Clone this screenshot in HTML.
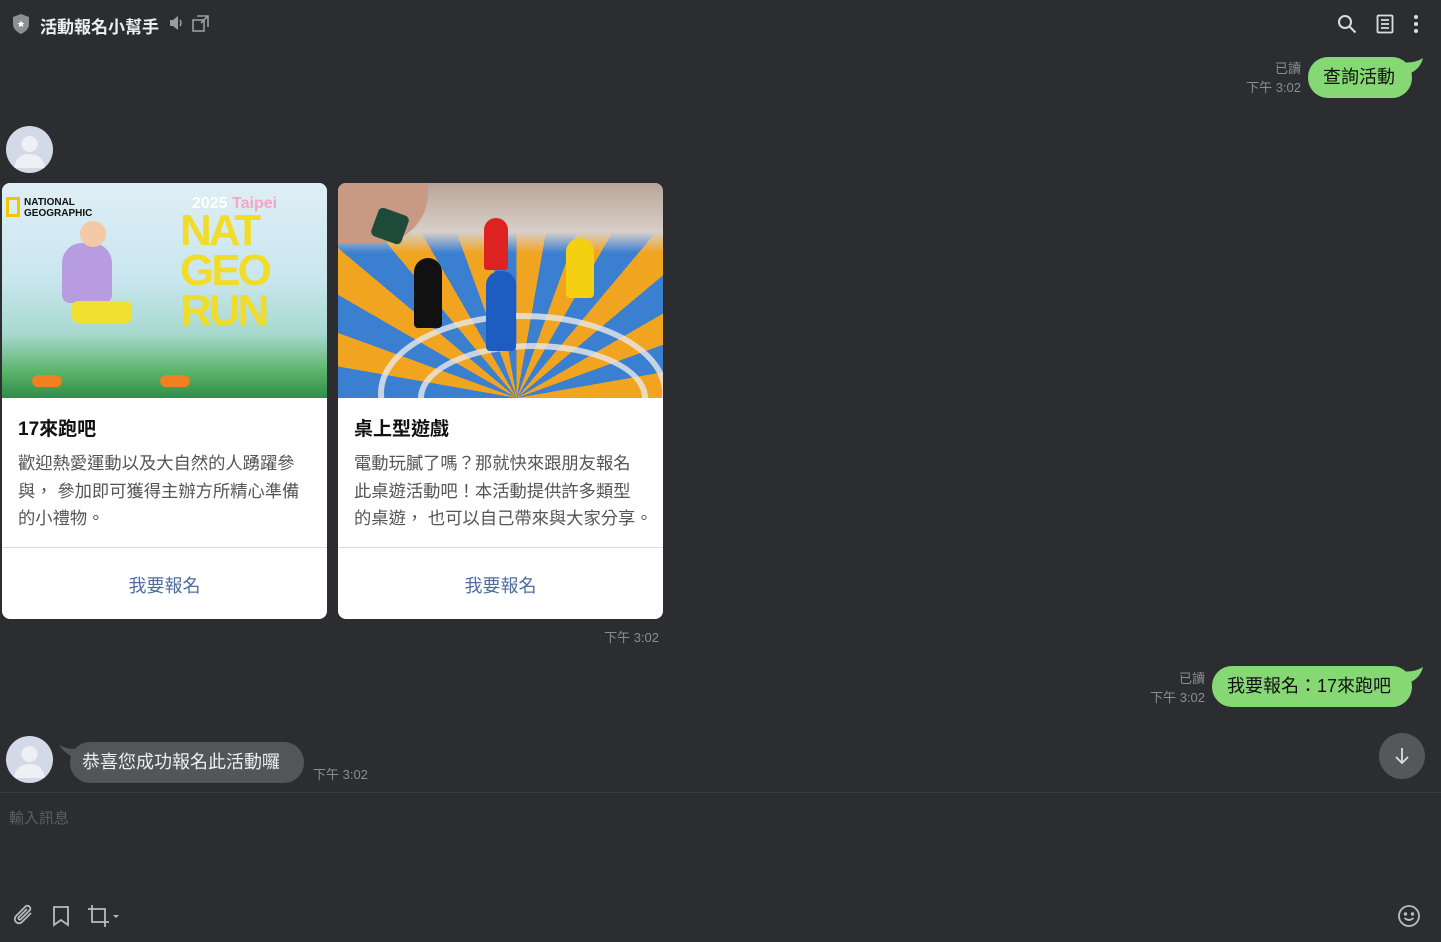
<!DOCTYPE html>
<html><head><meta charset="utf-8"><style>
*{margin:0;padding:0;box-sizing:border-box}
body{width:1441px;height:942px;background:#2c2d30;font-family:"Liberation Sans","Noto Sans CJK TC",sans-serif;position:relative;overflow:hidden;color:#fff}
.abs{position:absolute}
.meta{color:#8a8c90;font-size:13px;text-align:right;line-height:19px}
.bubg{background:#85d874;color:#111;font-size:18px;border-radius:20px;height:41px;line-height:41px;padding:0 15px;white-space:nowrap}
.card{position:absolute;top:183px;width:325px;height:436px;background:#fff;border-radius:8px;overflow:hidden}
.card .img{height:215px;overflow:hidden;position:relative}
.card h3{color:#111;font-size:19px;font-weight:bold;margin:20px 0 0 16px;line-height:24px}
.card p{color:#555;font-size:17.3px;line-height:27.5px;margin:8px 0 0 16px;height:96px;white-space:nowrap}
.card .hr{position:absolute;top:364px;left:0;right:0;border-top:1px solid #ddd}
.card .btn{position:absolute;top:389px;left:0;right:0;text-align:center;color:#4d6e9e;font-size:18px}
.av{width:47px;height:47px;border-radius:50%;background:#d3d9e6;overflow:hidden}
</style></head><body>
<svg class="abs" style="left:11px;top:13px" width="20" height="22" viewBox="0 0 20 22"><path d="M10 1 L18 4 V11 C18 16 14 19 10 21 C6 19 2 16 2 11 V4Z" fill="#8d8f93"/><path d="M10 7.5l1.1 2.3 2.4.3-1.8 1.6.5 2.4-2.2-1.2-2.2 1.2.5-2.4-1.8-1.6 2.4-.3z" fill="#fff"/></svg>
<div class="abs" style="left:40px;top:13px;font-size:17px;font-weight:bold;color:#eee">活動報名小幫手</div>
<svg class="abs" style="left:168px;top:15px" width="16" height="16" viewBox="0 0 16 16"><path d="M2 5h3l5-4v14l-5-4H2z" fill="#9a9ca0"/><path d="M12 5q2 3 0 6" stroke="#9a9ca0" stroke-width="1.5" fill="none"/></svg>
<svg class="abs" style="left:192px;top:15px" width="17" height="17" viewBox="0 0 17 17" fill="none" stroke="#9a9ca0" stroke-width="1.6"><rect x="1" y="5" width="11" height="11"/><path d="M5 1h11v11M9 8l7-7"/></svg>
<svg class="abs" style="left:1337px;top:14px" width="20" height="20" viewBox="0 0 20 20" fill="none" stroke="#ddd" stroke-width="2"><circle cx="8" cy="8" r="6"/><path d="M12.5 12.5l6 6"/></svg>
<svg class="abs" style="left:1376px;top:14px" width="18" height="20" viewBox="0 0 18 20" fill="none" stroke="#ddd" stroke-width="1.8"><rect x="1.5" y="1.5" width="15" height="17" rx="1"/><path d="M5 6h8M5 10h8M5 14h8"/></svg>
<svg class="abs" style="left:1412px;top:14px" width="8" height="22"><circle cx="4" cy="3" r="2" fill="#ddd"/><circle cx="4" cy="10" r="2" fill="#ddd"/><circle cx="4" cy="17" r="2" fill="#ddd"/></svg>

<div class="abs meta" style="left:1230px;width:71px;top:59px">已讀<br>下午 3:02</div>
<div class="abs bubg" style="left:1308px;top:57px;width:104px">查詢活動</div>
<svg class="abs" style="left:1400px;top:58px" width="24" height="18"><path d="M0 4 Q14 6 23 0 Q20 12 8 16Z" fill="#85d874"/></svg>

<div class="abs av" style="left:6px;top:126px"><svg width="47" height="47"><circle cx="23.5" cy="18" r="8" fill="#eef0f6"/><path d="M8 42 Q10 28 23.5 28 Q37 28 39 42Z" fill="#eef0f6"/></svg></div>

<div class="card" style="left:2px">
 <div class="img" style="background:linear-gradient(180deg,#dfeef5 0%,#c9e6ee 45%,#a8d9cf 70%,#5bb36a 88%,#2f8c4a 100%)">
  <div class="abs" style="left:4px;top:14px;width:14px;height:20px;border:3px solid #f4c400"></div>
  <div class="abs" style="left:22px;top:14px;font-size:10px;color:#111;line-height:11px;font-weight:bold">NATIONAL<br>GEOGRAPHIC</div>
  <div class="abs" style="left:190px;top:12px;font-size:16px;color:#fff;font-weight:bold">2025 <span style="color:#f4a6c4">Taipei</span></div>
  <div class="abs" style="left:178px;top:28px;font-size:44px;line-height:40px;font-weight:bold;color:#f2dc2a;letter-spacing:-3px">NAT<br>GEO<br>RUN</div>
  <div class="abs" style="left:60px;top:60px;width:50px;height:60px;background:#b79ce0;border-radius:20px 20px 8px 8px"></div>
  <div class="abs" style="left:78px;top:38px;width:26px;height:26px;background:#f3c9a8;border-radius:50%"></div>
  <div class="abs" style="left:70px;top:118px;width:60px;height:22px;background:#f0e030;border-radius:6px"></div>
  <div class="abs" style="left:30px;top:192px;width:30px;height:12px;background:#f08020;border-radius:6px"></div>
  <div class="abs" style="left:158px;top:192px;width:30px;height:12px;background:#f08020;border-radius:6px"></div>
 </div>
 <h3>17來跑吧</h3>
 <p>歡迎熱愛運動以及大自然的人踴躍參<br>與，&nbsp;參加即可獲得主辦方所精心準備<br>的小禮物。</p>
 <div class="hr"></div><div class="btn">我要報名</div>
</div>
<div class="card" style="left:338px">
 <div class="img" style="background:repeating-conic-gradient(from 0deg at 55% 100%,#f0a420 0deg 10deg,#3a7fd0 10deg 20deg);">
  <div class="abs" style="left:0;top:0;width:325px;height:70px;background:linear-gradient(180deg,#b8a598,#d8cfc8 70%,rgba(220,215,210,0))"></div>
  <div class="abs" style="left:40px;top:130px;width:290px;height:160px;border:6px solid #e8e8e8;border-radius:50%;opacity:.8"></div>
  <div class="abs" style="left:80px;top:160px;width:230px;height:110px;border:6px solid #e8e8e8;border-radius:50%;opacity:.8"></div>
  <div class="abs" style="left:0;top:0;width:90px;height:60px;background:#c89a84;border-radius:0 0 50px 0"></div>
  <div class="abs" style="left:36px;top:28px;width:32px;height:30px;background:#1e4a3a;border-radius:5px;transform:rotate(20deg)"></div>
  <div class="abs" style="left:76px;top:75px;width:28px;height:70px;background:#111;border-radius:14px 14px 4px 4px"></div>
  <div class="abs" style="left:148px;top:88px;width:30px;height:80px;background:#1d5cc0;border-radius:14px 14px 4px 4px"></div>
  <div class="abs" style="left:146px;top:35px;width:24px;height:52px;background:#d22;border-radius:12px 12px 3px 3px"></div>
  <div class="abs" style="left:228px;top:55px;width:28px;height:60px;background:#f5d010;border-radius:14px 14px 4px 4px"></div>
 </div>
 <h3>桌上型遊戲</h3>
 <p>電動玩膩了嗎？那就快來跟朋友報名<br>此桌遊活動吧！本活動提供許多類型<br>的桌遊，&nbsp;也可以自己帶來與大家分享。</p>
 <div class="hr"></div><div class="btn">我要報名</div>
</div>
<div class="abs meta" style="left:590px;width:69px;top:628px">下午 3:02</div>

<div class="abs meta" style="left:1130px;width:75px;top:669px">已讀<br>下午 3:02</div>
<div class="abs bubg" style="left:1212px;top:666px;width:200px">我要報名：17來跑吧</div>
<svg class="abs" style="left:1400px;top:667px" width="24" height="18"><path d="M0 4 Q14 6 23 0 Q20 12 8 16Z" fill="#85d874"/></svg>

<div class="abs av" style="left:6px;top:736px"><svg width="47" height="47"><circle cx="23.5" cy="18" r="8" fill="#eef0f6"/><path d="M8 42 Q10 28 23.5 28 Q37 28 39 42Z" fill="#eef0f6"/></svg></div>
<svg class="abs" style="left:59px;top:745px" width="24" height="16"><path d="M0 0 Q12 6 22 3 L22 14 Q8 12 0 0Z" fill="#545557"/></svg>
<div class="abs" style="left:70px;top:742px;width:234px;height:41px;line-height:41px;background:#545557;border-radius:20px;color:#eee;font-size:18px;padding-left:12px;white-space:nowrap">恭喜您成功報名此活動囉</div>
<div class="abs meta" style="left:313px;top:765px;text-align:left">下午 3:02</div>

<div class="abs" style="left:1379px;top:733px;width:46px;height:46px;border-radius:50%;background:#55575a"></div>
<svg class="abs" style="left:1393px;top:746px" width="18" height="20" fill="none" stroke="#ddd" stroke-width="1.8"><path d="M9 2v15M3 11l6 6 6-6"/></svg>

<div class="abs" style="left:0;right:0;top:792px;border-top:1px solid #3b3c3f"></div>
<div class="abs" style="left:9px;top:807px;font-size:15px;color:#5c5e62">輸入訊息</div>
<svg class="abs" style="left:12px;top:904px" width="24" height="24" viewBox="0 0 24 24" fill="none" stroke="#bbb" stroke-width="1.8"><path d="M19 9l-9 9a4 4 0 0 1-6-6l10-10a3 3 0 0 1 4 4l-9.5 9.5a1.5 1.5 0 0 1-2-2L15 5"/></svg>
<svg class="abs" style="left:51px;top:905px" width="20" height="22" fill="none" stroke="#bbb" stroke-width="1.8"><path d="M3 2h14v18l-7-5-7 5z"/></svg>
<svg class="abs" style="left:87px;top:904px" width="36" height="24" fill="none" stroke="#bbb" stroke-width="1.8"><path d="M5 1v17h17M1 5h17v18"/><path d="M26 11h6l-3 3z" fill="#bbb" stroke="none"/></svg>
<svg class="abs" style="left:1397px;top:904px" width="24" height="24" fill="none" stroke="#bbb" stroke-width="1.8"><circle cx="12" cy="12" r="10"/><circle cx="8.5" cy="10" r=".8" fill="#bbb"/><circle cx="15.5" cy="10" r=".8" fill="#bbb"/><path d="M7.5 14q4.5 4 9 0"/></svg>
</body></html>
